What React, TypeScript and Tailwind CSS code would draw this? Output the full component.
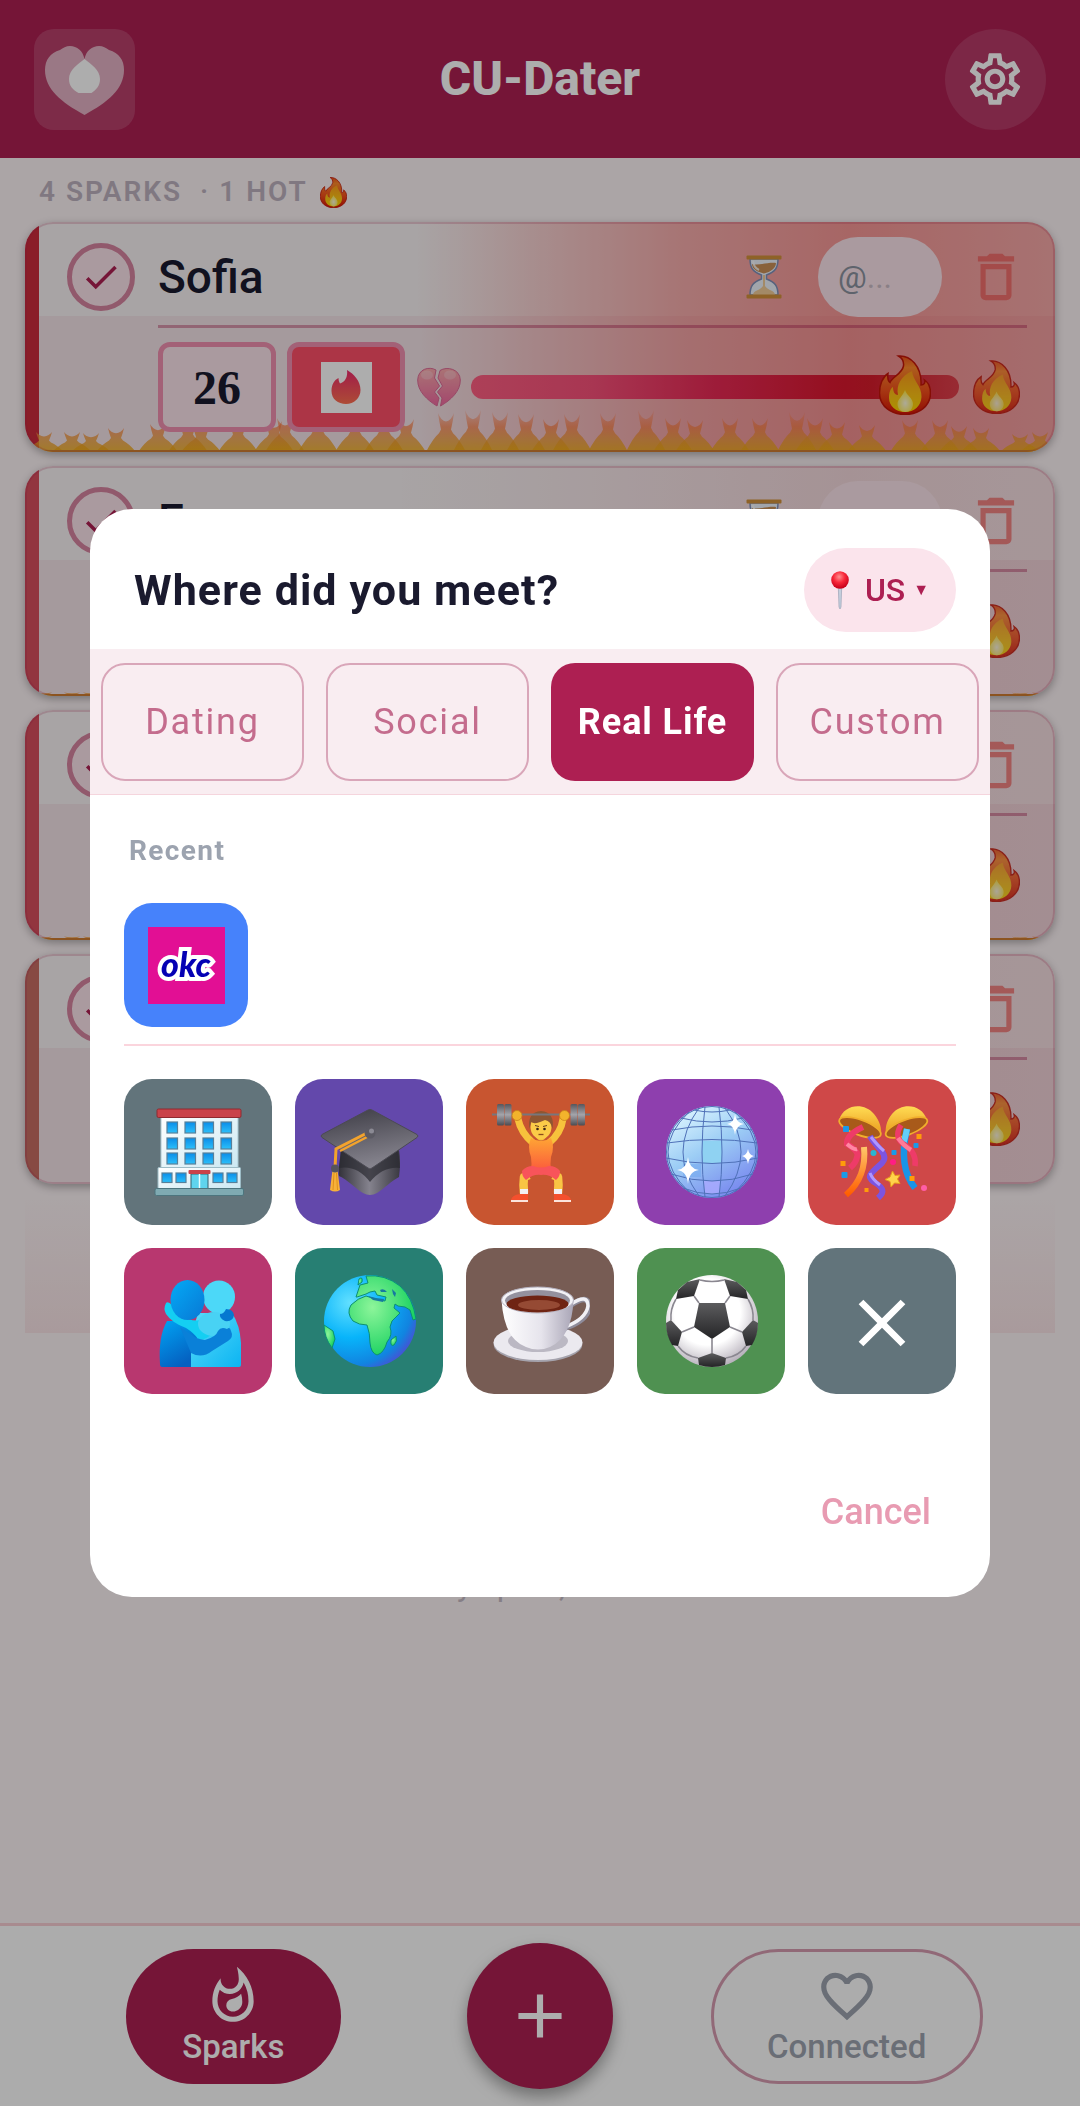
import type { ReactNode } from "react";
import {
  MdAdd,
  MdCheck,
  MdClose,
  MdDeleteOutline,
  MdFavoriteBorder,
  MdOutlineSettings,
  MdOutlineWhatshot,
} from "react-icons/md";

/* ---------- Small pictograms ---------- */

function Fire({ className }: { className: string }) {
  return (
    <svg viewBox="0 0 52 60" className={className} aria-hidden="true">
      <defs>
        <linearGradient id="fireOuter" x1="0" y1="0" x2="0" y2="1">
          <stop offset="0" stopColor="#f0501c" />
          <stop offset="0.2" stopColor="#ff8a2a" />
          <stop offset="0.6" stopColor="#f5501c" />
          <stop offset="1" stopColor="#d81404" />
        </linearGradient>
        <linearGradient id="fireMid" x1="0" y1="0" x2="0" y2="1">
          <stop offset="0" stopColor="#ff9d1c" />
          <stop offset="0.6" stopColor="#ffc414" />
          <stop offset="1" stopColor="#ffd800" />
        </linearGradient>
        <radialGradient id="fireCore" cx="0.5" cy="0.6" r="0.6">
          <stop offset="0" stopColor="#fffbe0" />
          <stop offset="1" stopColor="#ffe93a" />
        </radialGradient>
      </defs>
      <path
        d="M19.500 1C31 0 43 11 42 30C45 30 46.500 28 45.500 25C50 28 51.500 33 51.500 38C51.500 51 40 59.500 26 59.500C12 59.500.5 51 .5 38C.5 30 3.500 22 9 18.500C8.500 22 9 26 11 27.500C13 22 23 19 24.500 11C25 7 23 3 19.500 1Z"
        fill="url(#fireOuter)"
        stroke="#c41508"
        strokeWidth="1.500"
      />
      <path
        d="M33 16C34 26 43 31 42.500 42C42 51 35 57 26 57C17 57 10 51 10 43C10 38 11 34 14 32C14 37 16 40 19 40C17 30 22 21 33 16Z"
        fill="url(#fireMid)"
      />
      <path d="M26 35C28 41 34 43 34 49C34 54 30.500 57 26.500 57C22 57 18.500 54 18.500 49C18.500 44 24 41 26 35Z" fill="url(#fireCore)" />
    </svg>
  );
}

function BrokenHeart() {
  return (
    <svg viewBox="0 0 44 40" className="h-10 w-[44px] shrink-0 opacity-75" aria-hidden="true">
      <defs>
        <linearGradient id="heartFill" x1="0" y1="0" x2="0" y2="1">
          <stop offset="0" stopColor="#ff9a9c" />
          <stop offset="1" stopColor="#f0428c" />
        </linearGradient>
      </defs>
      <path d="M19 3C12-1 1 2 .7 13C.5 24 10 33 20 39L22 31L17.500 25L22.500 19L17.500 11Z" fill="url(#heartFill)" stroke="#d8447e" />
      <path d="M23 3.500C30-1 43 2 43.300 13C43.500 24 34 33 23.500 39L25 31L20.500 25L25.500 19L21 11Z" fill="url(#heartFill)" stroke="#d8447e" />
      <ellipse cx="10" cy="8" rx="6" ry="4.500" fill="#fff" opacity="0.25" />
      <ellipse cx="33" cy="8" rx="6" ry="4.500" fill="#fff" opacity="0.25" />
    </svg>
  );
}

function Hourglass() {
  return (
    <svg viewBox="0 0 36 44" className="h-11 w-9 shrink-0" aria-label="Pending" role="img">
      <path d="M4 4C4 13 7 17 15.500 20V24C7 27 4 31 4 40H32C32 31 29 27 20.500 24V20C29 17 32 13 32 4Z" fill="#eef4fc" stroke="#8190b8" strokeWidth="1.500" />
      <path d="M6 9C12 11 22 7 30 8C30 13 25 17 18 18.500C11 17 6 14 6 9Z" fill="#c98f58" />
      <path d="M7 40C7 35 14 36 17 31V20H19V31C22 36 29 35 29 40Z" fill="#f0cc98" />
      <path d="M7 6C8 11 9 13 13 15" fill="none" stroke="#fff" strokeWidth="2" opacity="0.8" />
      <rect x="0.500" y="0.500" width="35" height="4" rx="1" fill="#d2913a" />
      <rect x="0.500" y="39.500" width="35" height="4" rx="1" fill="#d2913a" />
    </svg>
  );
}

function Pin() {
  return (
    <svg viewBox="0 0 18 38" className="h-[38px] w-[18px]" aria-hidden="true">
      <defs>
        <radialGradient id="pinHead" cx="0.45" cy="0.32" r="0.65">
          <stop offset="0" stopColor="#ff8f8f" />
          <stop offset="0.5" stopColor="#f8283a" />
          <stop offset="1" stopColor="#c8001a" />
        </radialGradient>
      </defs>
      <path d="M7.300 16H10.700L10 36L9 38L8 36Z" fill="#c5cfdd" stroke="#8f9bae" strokeWidth="0.600" />
      <circle cx="9" cy="9" r="8.800" fill="url(#pinHead)" />
    </svg>
  );
}

function AppLogo() {
  return (
    <svg viewBox="0 0 101 101" className="h-full w-full" aria-hidden="true">
      <path
        d="M50.500 30C49 22 43 17 36 17C32 17 29 19 26 21C16 24 11 31 11 41C11 60 27 73 50.500 86C74 73 90 60 90 41C90 31 85 24 75 21C72 19 69 17 65 17C58 17 52 22 50.500 30Z"
        fill="#fff"
        opacity="0.6"
      />
      <path d="M50.500 30C57 35 66 41 66 50C66 57 62 61 57.500 64H44.500C39 61 35 57 35 50C35 41 44 35 50.500 30Z" fill="#fff" />
    </svg>
  );
}

function TinderFlame() {
  return (
    <svg viewBox="0 0 30 34" className="h-[34px] w-[30px]" aria-hidden="true">
      <defs>
        <linearGradient id="tinderFill" x1="0" y1="0" x2="0" y2="1">
          <stop offset="0" stopColor="#ee2a6c" />
          <stop offset="1" stopColor="#ff7050" />
        </linearGradient>
      </defs>
      <path d="M16 0C23 4 29.500 11 29.500 20C29.500 28 23 34 15 34C7 34 .5 29 .5 21C.5 15 3 10 7.500 8C7.500 10 8 12 9 13.500C14 12 17 7 16 0Z" fill="url(#tinderFill)" />
    </svg>
  );
}

/* ---------- Place pictures, all on a 100 x 100 canvas ---------- */

function Building() {
  const cols = [19, 37, 55, 73];
  const rows = [20, 36, 51];
  return (
    <>
      <defs>
        <linearGradient id="win" x1="0" y1="0" x2="0" y2="1">
          <stop offset="0" stopColor="#0a8ce8" />
          <stop offset="1" stopColor="#2cc0fa" />
        </linearGradient>
        <linearGradient id="wall" x1="0" y1="0" x2="1" y2="1">
          <stop offset="0" stopColor="#fff" />
          <stop offset="1" stopColor="#cbe8f2" />
        </linearGradient>
      </defs>
      <rect x="13" y="13" width="77" height="54" fill="url(#wall)" stroke="#a9c6d0" />
      <rect x="9" y="7" width="84" height="8.500" rx="1.500" fill="#c9434a" stroke="#8f2a30" />
      <rect x="10" y="65.500" width="82.500" height="21" rx="1" fill="url(#wall)" stroke="#9dbcc6" />
      {rows.map((y) =>
        cols.map((x) => <rect key={`${x}-${y}`} x={x} y={y} width="10.500" height="11" fill="url(#win)" stroke="#57809a" strokeWidth="1.200" />),
      )}
      {[14, 28, 65, 79].map((x) => (
        <rect key={x} x={x} y="71" width="10" height="9.500" fill="url(#win)" stroke="#57809a" strokeWidth="1.200" />
      ))}
      <rect x="43" y="72" width="17" height="15" fill="#5fd4ee" stroke="#34606e" />
      <path d="M51.500 72V87" stroke="#eaffff" strokeWidth="1.500" />
      <rect x="40.500" y="68" width="22" height="4" rx="1" fill="#c9434a" />
      <rect x="7" y="86.500" width="88.500" height="7" rx="1.500" fill="#7faab2" stroke="#4d757e" />
    </>
  );
}

function GradCap() {
  return (
    <>
      <defs>
        <linearGradient id="capTop" x1="0" y1="0" x2="0.3" y2="1">
          <stop offset="0" stopColor="#3c3b44" />
          <stop offset="1" stopColor="#85838d" />
        </linearGradient>
        <linearGradient id="capBase" x1="0" y1="0" x2="1" y2="0">
          <stop offset="0" stopColor="#33323a" />
          <stop offset="0.5" stopColor="#85838e" />
          <stop offset="1" stopColor="#3a3941" />
        </linearGradient>
      </defs>
      <path d="M22 48C21 60 19 70 20 74C28 77 38 88 44 91Q51 95 58 91C66 86 72 79 80 75Q82 60 80 48Z" fill="url(#capBase)" />
      <path d="M22 48C21 56 20 62 20 66Q38 63 51 80Q64 64 81 66L79 46Z" fill="#2a2931" opacity="0.7" />
      <path d="M3 32.500L49 8Q51 7 53 8L98 32.500Q100 34 98 35.500L53 66Q51 68 49 66L3 35.500Q1 34 3 32.500Z" fill="url(#capTop)" stroke="#4b4a53" />
      <path d="M48 31L17 47L16 66" fill="none" stroke="#f3a32c" strokeWidth="3" />
      <path d="M50 34L21 49" fill="none" stroke="#f3a32c" strokeWidth="2.500" />
      <circle cx="51" cy="31" r="5.500" fill="#5b5a63" />
      <circle cx="52.500" cy="29" r="2.500" fill="#8b8a94" />
      <path d="M13.500 68H18.500L21 88Q16 91 11 88Z" fill="#f7b13a" />
      <path d="M15 71L14 88M17.500 71L18.500 88" stroke="#d98612" strokeWidth="0.800" />
      <circle cx="16" cy="66.500" r="4" fill="#55545d" />
    </>
  );
}

function Lifter() {
  return (
    <>
      <defs>
        <linearGradient id="plate" x1="0" y1="0" x2="0" y2="1">
          <stop offset="0" stopColor="#56565c" />
          <stop offset="0.5" stopColor="#a4a4aa" />
          <stop offset="1" stopColor="#4c4c52" />
        </linearGradient>
        <linearGradient id="suit" x1="0" y1="0" x2="0" y2="1">
          <stop offset="0" stopColor="#ffa534" />
          <stop offset="1" stopColor="#fb5c3c" />
        </linearGradient>
      </defs>
      <path d="M28 17Q31 31 43 41M73 17Q71 31 59 41" fill="none" stroke="#f7c23c" strokeWidth="7" strokeLinecap="round" />
      <path d="M39 73L34 75Q33 82 34 91M63 73L68 75Q69 82 68 91" fill="none" stroke="#f9c544" strokeWidth="8.500" strokeLinejoin="round" />
      <path d="M30 87H38V93H30ZM64 87H72V93H64Z" fill="#f2f0f4" />
      <path d="M21 98Q22 93 30 92H38V98ZM81 98Q80 93 72 92H64V98Z" fill="#f4502e" />
      <path d="M21 99H38M64 99H81" stroke="#fbe4dc" strokeWidth="1.800" />
      <path d="M41 36Q51 42 61 36Q65 45 61 55Q60 62 61 68H41Q42 62 41 55Q37 45 41 36Z" fill="url(#suit)" />
      <path d="M43 64Q51 67 59 64Q66 64 70 69Q70 75 66 78Q59 72 51 73Q43 72 36 78Q32 75 32 69Q36 64 43 64Z" fill="#f8545a" />
      <path d="M45 34Q51 43 57 34V30H45Z" fill="#f7c23c" />
      <ellipse cx="51" cy="25" rx="10.500" ry="12" fill="#fbcb48" />
      <path d="M39.500 27Q37 10 51 9Q65 10 62.500 27Q61 19 55 18Q45 23 41 20Z" fill="#8d5632" />
      <path d="M45 23.500L49 24.500M57 23.500L53 24.500" stroke="#6b3f1e" />
      <circle cx="47.500" cy="27" r="1.300" fill="#3a2416" />
      <circle cx="54.500" cy="27" r="1.300" fill="#3a2416" />
      <path d="M48.500 32.500H53.500" stroke="#8a4a1c" strokeWidth="1.300" />
      <path d="M2 12.500H100" stroke="#77777d" strokeWidth="2.200" />
      <rect x="7" y="2" width="7" height="21.500" rx="1.500" fill="url(#plate)" />
      <rect x="14.500" y="2" width="7" height="21.500" rx="1.500" fill="url(#plate)" />
      <rect x="80.500" y="2" width="7" height="21.500" rx="1.500" fill="url(#plate)" />
      <rect x="88" y="2" width="7" height="21.500" rx="1.500" fill="url(#plate)" />
      <circle cx="27" cy="13.500" r="5" fill="#f3b32c" stroke="#c9821a" strokeWidth="0.800" />
      <circle cx="74.500" cy="13.500" r="5" fill="#f3b32c" stroke="#c9821a" strokeWidth="0.800" />
    </>
  );
}

function DiscoBall() {
  return (
    <>
      <defs>
        <linearGradient id="disco" x1="0.200" y1="0" x2="0.800" y2="1">
          <stop offset="0" stopColor="#def6ff" />
          <stop offset="0.450" stopColor="#9ccdf5" />
          <stop offset="1" stopColor="#7480ee" />
        </linearGradient>
      </defs>
      <circle cx="51" cy="50" r="46" fill="url(#disco)" />
      <rect x="41" y="39" width="20" height="22" fill="#8fd2f2" />
      <rect x="43" y="79" width="16" height="13" fill="#aaaaff" opacity="0.8" />
      <rect x="22" y="62" width="18" height="13" fill="#6fa8ee" opacity="0.5" />
      <g fill="none" stroke="#4f71b8" strokeWidth="1">
        <path d="M44 5Q38 50 44 95M58 5Q64 50 58 95M38 6Q6 50 38 94M64 6Q96 50 64 94M28 10Q-14 50 28 90M74 10Q116 50 74 90" />
        <path d="M33 8Q51 12 69 8M20 16Q51 24 82 16M11 28Q51 20 91 28M6 41Q51 34 96 41M5 56Q51 67 97 56M10 72Q51 86 92 72M22 86Q51 98 80 86" />
        <circle cx="51" cy="50" r="45.500" />
      </g>
      <g fill="#fff">
        <path d="M74 12Q75 21 83 22Q75 23 74 33Q73 23 66 22Q73 21 74 12Z" />
        <path d="M87 47Q88 53 93 54Q88 55 87 62Q86 55 81 54Q86 53 87 47Z" />
        <path d="M27 55Q28 67 38 68Q28 69 27 82Q26 69 16 68Q26 67 27 55Z" />
      </g>
    </>
  );
}

function Confetti() {
  return (
    <>
      <defs>
        <linearGradient id="bowl" x1="0" y1="0" x2="0" y2="1">
          <stop offset="0" stopColor="#ffdc54" />
          <stop offset="1" stopColor="#e8961a" />
        </linearGradient>
        <linearGradient id="orangeRibbon" x1="0" y1="0" x2="0" y2="1">
          <stop offset="0" stopColor="#ffc76a" />
          <stop offset="1" stopColor="#ff5d00" />
        </linearGradient>
      </defs>
      <path d="M7 18C12 2 32 0 42 12C48 19 50 27 49 34Z" fill="url(#bowl)" />
      <ellipse cx="28" cy="25.500" rx="22" ry="7.500" transform="rotate(20 28 25.500)" fill="#a85a1a" stroke="#f0ae2c" strokeWidth="1.800" />
      <path d="M95 18C90 2 70 0 60 12C54 19 53 27 54 34Z" fill="url(#bowl)" />
      <ellipse cx="74.500" cy="25.500" rx="22" ry="7.500" transform="rotate(-20 74.500 25.500)" fill="#a85a1a" stroke="#f0ae2c" strokeWidth="1.800" />
      <g fill="none" strokeLinecap="butt">
        <path d="M31 25Q14 33 15 42Q28 50 25 55Q24 61 18 66" stroke="#ee3b68" strokeWidth="6" />
        <path d="M15 42Q22 48 25 47" stroke="#ff88a4" strokeWidth="4" />
        <path d="M32 45Q35 75 14 93" stroke="url(#orangeRibbon)" strokeWidth="6" />
        <path d="M38 34C44 46 58 52 50 61C38 72 34 74 42 80C52 86 53 90 46 96" stroke="#7c54e0" strokeWidth="6" />
        <path d="M39 35Q46 44 52 49M38 71Q40 77 48 83" stroke="#b096ff" strokeWidth="3" />
        <path d="M75 27Q66 65 83 86" stroke="#1a94e6" strokeWidth="6.500" />
        <path d="M75 27Q73 37 71 42" stroke="#62d0fa" strokeWidth="6" />
        <path d="M69 23Q61 36 73 43Q85 51 83 64" stroke="#ee3b68" strokeWidth="5.500" />
        <path d="M66 36Q72 44 79 48" stroke="#ff7b98" strokeWidth="4.500" />
      </g>
      <path d="M60.500 69L63 73.500L68 73L65.500 77L68 81.500L62.500 81L59 85L58 79.500L53 77.500L58 75Z" fill="#ffd34a" stroke="#e89a1c" />
      <g fill="#ff9c0a">
        <rect x="8.500" y="59" width="5" height="5" />
        <rect x="84.500" y="32" width="5" height="5" />
        <rect x="32.500" y="86" width="4" height="4" />
        <rect x="77.500" y="74" width="5" height="5" />
      </g>
      <g fill="#1a9ae8">
        <rect x="11" y="24" width="6" height="6" rx="1" />
        <rect x="9.500" y="70" width="6" height="6" rx="1" />
        <circle cx="41.500" cy="51" r="3" fill="#2ab4d0" />
        <rect x="59.500" y="48" width="5" height="5" rx="1" />
        <rect x="81.500" y="41" width="5" height="5" rx="1" />
      </g>
      <circle cx="61" cy="60" r="3" fill="#ff1d84" />
      <circle cx="92" cy="86" r="3" fill="#ff5ea6" />
    </>
  );
}

function Hug() {
  return (
    <>
      <defs>
        <linearGradient id="hugDark" x1="0" y1="0" x2="0.500" y2="1">
          <stop offset="0" stopColor="#00a4f4" />
          <stop offset="1" stopColor="#0560c0" />
        </linearGradient>
        <linearGradient id="hugHead" x1="0" y1="0" x2="1" y2="1">
          <stop offset="0" stopColor="#04aaf6" />
          <stop offset="1" stopColor="#0878d4" />
        </linearGradient>
        <linearGradient id="hugLight" x1="0" y1="0" x2="1" y2="1">
          <stop offset="0" stopColor="#5adcfa" />
          <stop offset="1" stopColor="#0cb4f2" />
        </linearGradient>
      </defs>
      <path d="M43 96V66L50 42H84Q92 54 93 72V94Q93 96 91 96Z" fill="url(#hugLight)" />
      <ellipse cx="71" cy="26" rx="16" ry="16.500" fill="#4cd8f8" />
      <path d="M14 96Q12 96 12 93Q10 66 19 50H43L50 66L43 82V96Z" fill="url(#hugDark)" />
      <path d="M18 32Q15 38 18 43Q24 52 38 57Q46 62 50 68Q58 70 64 62L60 48Q34 54 24 34Q20 30 18 32Z" fill="#14cff2" />
      <ellipse cx="66" cy="53" rx="16" ry="12" fill="#48d2f4" />
      <path d="M43 82Q54 88 64 80L80 70Q86 66 83 60Q82 55 79 58Q73 55 70 60Q68 66 57 69Q48 68 44 64L32 56Z" fill="#0a80d8" />
      <ellipse cx="39.500" cy="29" rx="17" ry="20" fill="url(#hugHead)" />
      <path d="M78 38Q85 38 86 44Q85 51 77 50Q71 47 72 43Q76 43 78 38Z" fill="#0578d0" />
    </>
  );
}

function Globe() {
  return (
    <>
      <defs>
        <radialGradient id="sea" cx="0.280" cy="0.300" r="0.850">
          <stop offset="0" stopColor="#62e0ff" />
          <stop offset="0.450" stopColor="#08b4fa" />
          <stop offset="0.800" stopColor="#1184e0" />
          <stop offset="1" stopColor="#5a3fd0" />
        </radialGradient>
        <radialGradient id="land" cx="0.350" cy="0.400" r="0.700">
          <stop offset="0" stopColor="#8df59a" />
          <stop offset="1" stopColor="#10cf5c" />
        </radialGradient>
      </defs>
      <circle cx="51" cy="50" r="46" fill="url(#sea)" />
      <g fill="url(#land)" stroke="#0c8f74" strokeWidth="1">
        <path d="M37 26L41 14L49 12L47 5Q66 3 81 15Q94 27 97 48L94 49L91 39L86 36L79 35L76 33L75 37L81 42L77 46Q72 49 71 56Q74 64 68 71Q65 82 58 84Q52 82 51 72Q51 62 48 54Q40 54 34 50Q27 42 32 34Q39 27 47 25Q58 29 66 30L67 26L58 24L56 20L51 21L47 23L38 26Z" />
        <path d="M5 54L14 60L16 68L13 77Q5 66 5 54Z" />
        <path d="M77 65Q79 70 75 74Q71 76 72 69Z" />
        <path d="M40 8Q44 5 43 11L39 14Z" />
      </g>
      <path d="M49 25L57 27L65 28L64 31L54 29ZM61 19Q65 17 68 21L62 21ZM73 18L77 22L76 26L74 23Z" fill="#1679a0" />
    </>
  );
}

function Coffee() {
  return (
    <>
      <defs>
        <linearGradient id="cup" x1="0" y1="0" x2="1" y2="0">
          <stop offset="0" stopColor="#fff" />
          <stop offset="0.550" stopColor="#e6e4ec" />
          <stop offset="1" stopColor="#a9a5b6" />
        </linearGradient>
      </defs>
      <ellipse cx="48" cy="73" rx="44.500" ry="18" fill="#a5a3ad" />
      <ellipse cx="48" cy="71.500" rx="44.500" ry="17.500" fill="#ebe9ef" />
      <ellipse cx="48" cy="70" rx="30" ry="11" fill="#bbb8c3" />
      <path d="M81 34Q99 22 99 36Q98 49 75 57" fill="none" stroke="#8e8b9a" strokeWidth="5.500" />
      <path d="M81 33Q98 22 98 35Q96 48 75 56" fill="none" stroke="#f1f0f5" strokeWidth="3.500" />
      <path d="M11.500 29Q14 68 36 76Q48 81 60 76Q82 66 83.500 29Z" fill="url(#cup)" />
      <ellipse cx="47.500" cy="29" rx="36" ry="13" fill="#f3f2f6" stroke="#b5b2c0" />
      <ellipse cx="47.500" cy="29.500" rx="32.500" ry="10.500" fill="#94919e" />
      <ellipse cx="47.500" cy="33" rx="31" ry="8.500" fill="#6f2413" />
      <ellipse cx="49" cy="34" rx="21" ry="5" fill="#954a34" />
    </>
  );
}

function Football() {
  return (
    <>
      <defs>
        <radialGradient id="ball" cx="0.450" cy="0.400" r="0.600">
          <stop offset="0.600" stopColor="#ffffff" />
          <stop offset="1" stopColor="#b9b3bd" />
        </radialGradient>
        <linearGradient id="patch" x1="0" y1="0" x2="0" y2="1">
          <stop offset="0" stopColor="#5c5c5e" />
          <stop offset="1" stopColor="#242426" />
        </linearGradient>
      </defs>
      <circle cx="51" cy="50" r="46" fill="url(#ball)" />
      <g fill="url(#patch)">
        <path d="M38 32H64L69 56L51 68L33 56Z" />
        <path d="M15 28L17 19L26 11L39 8L33 25Z" />
        <path d="M87 28L85 19L76 11L63 8L69 25Z" />
        <path d="M5 52L10 49L21 61L17 75L11 74Q5 64 5 52Z" />
        <path d="M97 52L92 49L81 61L85 75L91 74Q97 64 97 52Z" />
        <path d="M37 87L51 82L65 87L64 94Q51 98 38 94Z" />
      </g>
      <path
        d="M38 32L33 25M64 32L69 25M69 56L81 61M33 56L21 61M51 68V82M15 28Q9 38 10 49M87 28Q93 38 92 49M17 75Q24 85 37 87M85 75Q78 85 65 87M39 9Q51 12 63 9"
        fill="none"
        stroke="#8a8790"
        strokeWidth="1.600"
      />
    </>
  );
}

/* ---------- Spark cards ---------- */

// [centre x, height] of every flame along the bottom edge of the card
const FLAMES: [number, number][] = [
  [19, 20], [47, 20], [66, 19], [91, 24], [133, 28], [163, 30], [176, 26], [213, 30], [249, 31], [260, 34],
  [293, 36], [330, 34], [359, 35], [381, 33], [421, 39], [448, 42], [475, 40], [501, 38], [526, 33], [547, 38],
  [583, 39], [621, 42], [648, 34], [670, 32], [705, 34], [735, 34], [772, 40], [790, 34], [812, 30], [842, 27],
  [885, 32], [915, 32], [934, 26], [956, 24], [995, 18], [1015, 20],
];

function FlameEdge({ scale }: { scale: number }) {
  const id = scale === 1 ? "edgeHot" : "edgeMild";
  return (
    <svg viewBox="0 0 1030 44" preserveAspectRatio="none" className="absolute inset-x-0 bottom-0 h-11 w-full" aria-hidden="true">
      <defs>
        <linearGradient id={id} gradientUnits="userSpaceOnUse" x1="0" y1={44 - 42 * scale} x2="0" y2="44">
          <stop offset="0" stopColor="#ff7a4a" stopOpacity="0.2" />
          <stop offset="0.4" stopColor="#fb7d40" stopOpacity="0.7" />
          <stop offset="0.7" stopColor="#ef9a30" stopOpacity="0.75" />
          <stop offset="1" stopColor="#f0ac10" stopOpacity="0.8" />
        </linearGradient>
      </defs>
      {FLAMES.map(([x, full]) => {
        const h = full * scale;
        const y = 44 - h;
        return (
          <path
            key={x}
            fill={`url(#${id})`}
            d={`M${x - 8} ${y}Q${x - 5} ${y + h * 0.2} ${x} ${y + h * 0.22}Q${x + 5} ${y + h * 0.2} ${x + 8} ${y}Q${x + 7} ${y + h * 0.2} ${x + 5} ${y + h * 0.42}L${x + 7} ${y + h * 0.52}Q${x + 13} ${y + h * 0.65} ${x + 20} 44H${x - 20}Q${x - 13} ${y + h * 0.65} ${x - 7} ${y + h * 0.52}L${x - 5} ${y + h * 0.42}Q${x - 7} ${y + h * 0.2} ${x - 8} ${y}Z`}
          />
        );
      })}
      <rect x="0" y="42" width="1030" height="2" fill="#d8942a" />
    </svg>
  );
}

type Spark = { name: string; age: number; heat: number; hot?: boolean; bar: string; flames: number };

const SPARKS: Spark[] = [
  { name: "Sofia", age: 26, heat: 89, hot: true, bar: "bg-[#cc2b3c]", flames: 1 },
  { name: "Emma", age: 24, heat: 60, bar: "bg-[#d74f5e]", flames: 0.18 },
  { name: "Mia", age: 27, heat: 55, bar: "bg-[#d74f5e]", flames: 0.18 },
  { name: "Olivia", age: 25, heat: 40, bar: "bg-[#c76e64]", flames: 0 },
];

function SparkCard({ spark }: { spark: Spark }) {
  return (
    <li className="relative overflow-hidden rounded-[28px] bg-[#f4e4e8] pb-5 shadow-[0_3px_8px_rgba(0,0,0,0.3)]">
      <div className="absolute inset-x-0 top-0 h-[94px] bg-[#f8f2f3]" />
      <div
        className={
          spark.hot
            ? "absolute inset-0 bg-[linear-gradient(to_right,rgba(244,67,54,0)_38%,rgba(244,67,64,0.2)_50%,rgba(244,67,64,0.4)_64%,rgba(244,67,64,0.52)_80%,rgba(244,67,64,0.42)_100%)]"
            : "absolute inset-0 bg-[linear-gradient(to_right,rgba(220,60,80,0)_36%,rgba(220,60,80,0.14)_80%,rgba(220,60,80,0.11)_100%)]"
        }
      />
      <div className={`absolute inset-y-0 left-0 w-[14px] ${spark.bar}`} />
      {spark.flames > 0 && <FlameEdge scale={spark.flames} />}
      <div className="pointer-events-none absolute inset-0 rounded-[28px] border-2 border-[#ad1f52]/20" />

      <div className="relative flex h-[94px] items-center pt-4 pr-7 pl-[42px]">
        <button
          aria-label={`Mark ${spark.name} as connected`}
          className="flex size-[68px] shrink-0 items-center justify-center rounded-full border-[5px] border-[#d6839f] bg-[#fbe4ea] text-[42px] text-[#ad1f52]"
        >
          <MdCheck />
        </button>
        <h2 className="ml-[23px] flex-1 text-[46px] leading-[56px] font-medium text-[#1a1a2e]">{spark.name}</h2>
        <Hourglass />
        <label className="ml-9 flex h-20 w-[124px] items-center rounded-full bg-[#fbe4ea] px-5 text-[32px] text-[#8b93a0]">
          <span>@</span>
          <input aria-label={`${spark.name}'s handle`} placeholder="..." className="w-full min-w-0 bg-transparent outline-none placeholder:text-[#cbbcc6]" />
        </label>
        <button aria-label={`Delete ${spark.name}`} className="ml-[23px] text-[62px] text-[#ef5350]/65">
          <MdDeleteOutline />
        </button>
      </div>

      <div className="relative mt-[9px] mr-7 ml-[133px] h-[3px] bg-[#ad1f52]/40" />

      <div className="relative mt-[14px] flex items-center pr-[35px] pl-[133px]">
        <input
          aria-label="Age"
          defaultValue={spark.age}
          className="h-[90px] w-[118px] rounded-[12px] border-[5px] border-[#f090b0] bg-[#fbe4ea] text-center font-['Liberation_Serif',serif] text-[48px] font-bold text-[#1a1a2e]"
        />
        <button
          aria-label="Met on Tinder"
          className="ml-[11px] flex h-[90px] w-[118px] shrink-0 items-center justify-center rounded-[12px] border-[5px] border-[#f090b0] bg-[#fe4f68]"
        >
          <span className="flex size-[51px] items-center justify-center bg-white">
            <TinderFlame />
          </span>
        </button>
        <span className="ml-3 flex">
          <BrokenHeart />
        </span>
        <div className="relative mr-[14px] ml-[10px] h-6 flex-1 rounded-full bg-[linear-gradient(to_right,#ff5f82,#f8507a_25%,#e82a55_50%,#dc1830_75%,#d81c2c_82%,#e0404c)]">
          <input aria-label="Heat" type="range" min="0" max="100" defaultValue={spark.heat} className="absolute inset-0 w-full opacity-0" />
          <span className="pointer-events-none absolute -top-5 flex -translate-x-1/2" style={{ left: `${spark.heat}%` }}>
            <Fire className="h-[60px] w-[52px]" />
          </span>
        </div>
        <Fire className="h-[54px] w-[47px] shrink-0 opacity-85" />
      </div>
    </li>
  );
}

/* ---------- Dialog ---------- */

const TABS = ["Dating", "Social", "Real Life", "Custom"];

const PLACES: { label: string; color: string; art: ReactNode }[] = [
  { label: "Work", color: "bg-[#62747b]", art: <Building /> },
  { label: "School", color: "bg-[#6348ab]", art: <GradCap /> },
  { label: "Gym", color: "bg-[#c85530]", art: <Lifter /> },
  { label: "Club", color: "bg-[#8e3fae]", art: <DiscoBall /> },
  { label: "Party", color: "bg-[#cf4848]", art: <Confetti /> },
  { label: "Friends", color: "bg-[#b8376f]", art: <Hug /> },
  { label: "Travel", color: "bg-[#277f73]", art: <Globe /> },
  { label: "Coffee shop", color: "bg-[#775c54]", art: <Coffee /> },
  { label: "Sports", color: "bg-[#4f9151]", art: <Football /> },
];

function MeetDialog() {
  return (
    <div role="dialog" aria-modal="true" aria-labelledby="meet-title" className="w-5/6 overflow-hidden rounded-[42px] bg-white">
      <div className="flex items-center justify-between px-[34px] pt-[39px] pb-[17px]">
        <h2 id="meet-title" className="pl-[10px] text-[43px] leading-[56px] font-bold tracking-wide text-[#1a1a2e]">
          Where did you meet?
        </h2>
        <button className="flex h-[84px] w-[152px] items-center justify-center rounded-full bg-[#fbe4ec] text-[32px] font-medium text-[#ad1f52]">
          <Pin />
          <span className="ml-4">US</span>
          <span className="ml-2 text-[16px]">▼</span>
        </button>
      </div>

      <div role="tablist" className="grid grid-cols-4 gap-[22px] border-b border-[#f5d5dd] bg-[#f9edf1] px-[11px] pt-[14px] pb-[13px]">
        {TABS.map((tab) => {
          const active = tab === "Real Life";
          return (
            <button
              key={tab}
              role="tab"
              aria-selected={active}
              className={
                active
                  ? "h-[118px] rounded-[24px] bg-[#ad1f52] text-[36px] font-bold tracking-wide text-white"
                  : "h-[118px] rounded-[24px] border-2 border-[#d9a6b9] text-[36px] tracking-wider text-[#c46c8d]"
              }
            >
              {tab}
            </button>
          );
        })}
      </div>

      <div className="px-[34px]">
        <h3 className="pt-10 pl-[5px] text-[28px] leading-8 font-bold tracking-wider text-[#9ca3af]">Recent</h3>
        <button aria-label="OkCupid" className="mt-9 flex size-[124px] items-center justify-center rounded-[28px] bg-[#4682fb]">
          <span className="flex size-[77px] items-center justify-center bg-[#e20f94] pb-1 font-['Lato',sans-serif] text-[34px] font-black text-[#0500b4] italic [paint-order:stroke_fill] [-webkit-text-stroke:8px_white]">
            okc
          </span>
        </button>
        <div className="mt-[17px] h-0.5 bg-[#fbd5dd]" />
        <div className="mt-[33px] grid grid-cols-5 gap-[23px]">
          {PLACES.map((place) => (
            <button key={place.label} aria-label={place.label} className={`flex h-[146px] items-center justify-center rounded-[28px] ${place.color}`}>
              <svg viewBox="0 0 100 100" className="size-[100px]" aria-hidden="true">
                {place.art}
              </svg>
            </button>
          ))}
          <button aria-label="Clear" className="flex h-[146px] items-center justify-center rounded-[28px] bg-[#62747b] pt-1 text-[80px] text-white">
            <MdClose />
          </button>
        </div>
      </div>

      <div className="flex justify-end px-[59px] pt-[94px] pb-[61px]">
        <button className="text-[36px] leading-[48px] font-medium text-[#e89bb2]">Cancel</button>
      </div>
    </div>
  );
}

/* ---------- Page ---------- */

export default function App() {
  return (
    <div className="flex min-h-screen flex-col bg-[#fcf3f5] font-['Roboto',sans-serif]">
      <header className="flex h-[158px] items-center justify-between bg-[#ad1f52] px-[34px] text-white">
        <div className="size-[101px] rounded-[20px] bg-white/15">
          <AppLogo />
        </div>
        <h1 className="text-[48px] font-extrabold">CU-Dater</h1>
        <button aria-label="Settings" className="flex size-[101px] items-center justify-center rounded-full bg-white/12 text-[62px]">
          <MdOutlineSettings />
        </button>
      </header>

      <main className="flex-1 px-[25px]">
        <p className="flex h-16 items-center pt-1 pl-[14px] text-[28px] font-semibold tracking-[2px] whitespace-pre text-[#bdb2bf]">
          4 SPARKS  · 1 HOT
          <Fire className="ml-3 h-[31px] w-[27px]" />
        </p>
        <ul className="flex flex-col gap-[14px]">
          {SPARKS.map((spark) => (
            <SparkCard key={spark.name} spark={spark} />
          ))}
        </ul>
        <div className="mt-[14px] h-[135px] bg-linear-to-b from-[#fae4e8]/0 to-[#fae4e6]" />
        <p className="mt-[232px] text-center text-[32px] leading-10 text-[#c4bac4]">Save every spark, warm or cold</p>
      </main>

      <nav className="flex h-[183px] items-center border-t-[3px] border-[#f8cdd3] bg-[#fefefe] px-20">
        <div className="flex flex-1 justify-center">
          <button className="flex h-[135px] w-[215px] flex-col items-center justify-center rounded-full bg-[#ad1f52] text-[33px] leading-10 font-medium text-white">
            <MdOutlineWhatshot className="size-[62px]" />
            Sparks
          </button>
        </div>
        <div className="flex flex-1 justify-center">
          <button aria-label="Add spark" className="flex size-[146px] items-center justify-center rounded-full bg-[#ad1f52] text-[74px] text-white shadow-[0_8px_16px_rgba(0,0,0,0.35)]">
            <MdAdd />
          </button>
        </div>
        <div className="flex flex-1 justify-center">
          <button className="flex h-[135px] w-[272px] flex-col items-center justify-center rounded-full border-[3px] border-[#d69bb0] text-[33px] leading-10 font-medium text-[#9ca3af]">
            <MdFavoriteBorder className="size-[62px]" />
            Connected
          </button>
        </div>
      </nav>

      <div className="fixed inset-0 flex items-center justify-center bg-black/32">
        <MeetDialog />
      </div>
    </div>
  );
}
